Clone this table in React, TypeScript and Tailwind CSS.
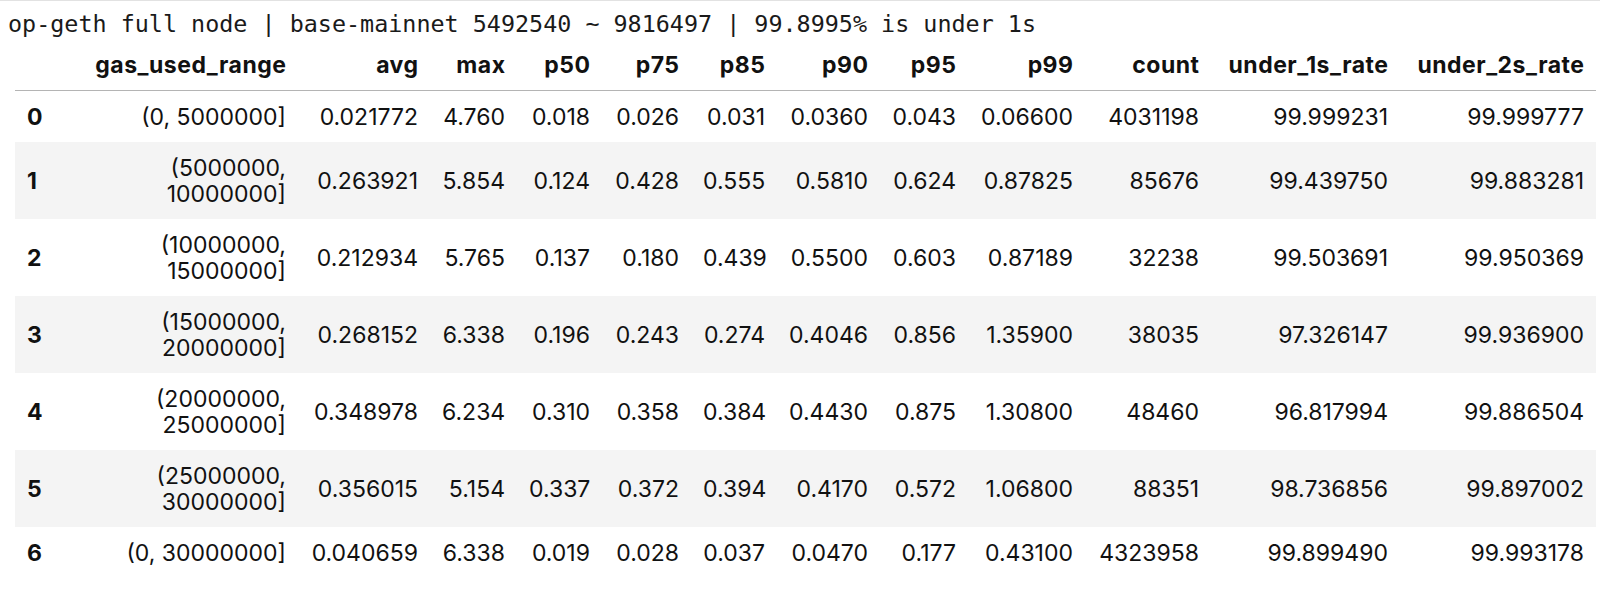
import React from 'react';

const COLUMNS = [
  { key: 'gas_used_range', w: 'w-[238px]' },
  { key: 'avg', w: 'w-[132px]' },
  { key: 'max', w: 'w-[87px]' },
  { key: 'p50', w: 'w-[85px]' },
  { key: 'p75', w: 'w-[89px]' },
  { key: 'p85', w: 'w-[86px]' },
  { key: 'p90', w: 'w-[103px]' },
  { key: 'p95', w: 'w-[88px]' },
  { key: 'p99', w: 'w-[117px]' },
  { key: 'count', w: 'w-[126px]' },
  { key: 'under_1s_rate', w: 'w-[189px]' },
  { key: 'under_2s_rate', w: 'w-[196px]' },
];

const ROWS: string[][] = [
  ['(0, 5000000]', '0.021772', '4.760', '0.018', '0.026', '0.031', '0.0360', '0.043', '0.06600', '4031198', '99.999231', '99.999777'],
  ['(5000000, 10000000]', '0.263921', '5.854', '0.124', '0.428', '0.555', '0.5810', '0.624', '0.87825', '85676', '99.439750', '99.883281'],
  ['(10000000, 15000000]', '0.212934', '5.765', '0.137', '0.180', '0.439', '0.5500', '0.603', '0.87189', '32238', '99.503691', '99.950369'],
  ['(15000000, 20000000]', '0.268152', '6.338', '0.196', '0.243', '0.274', '0.4046', '0.856', '1.35900', '38035', '97.326147', '99.936900'],
  ['(20000000, 25000000]', '0.348978', '6.234', '0.310', '0.358', '0.384', '0.4430', '0.875', '1.30800', '48460', '96.817994', '99.886504'],
  ['(25000000, 30000000]', '0.356015', '5.154', '0.337', '0.372', '0.394', '0.4170', '0.572', '1.06800', '88351', '98.736856', '99.897002'],
  ['(0, 30000000]', '0.040659', '6.338', '0.019', '0.028', '0.037', '0.0470', '0.177', '0.43100', '4323958', '99.899490', '99.993178'],
];

export default function App() {
  return (
    <div className="w-[1600px] h-[595px] bg-white border-t border-[#e2e2e2] overflow-hidden text-[#111]">
      {/* notebook print output */}
      <pre className="pl-[8px] pt-[8px] text-[23.4px] leading-[30px] font-['DejaVu_Sans_Mono',monospace] text-[#1a1a1a]">
        op-geth full node | base-mainnet 5492540 ~ 9816497 | 99.8995% is under 1s
      </pre>

      {/* dataframe */}
      <table className="ml-[15px] w-[1581px] table-fixed border-collapse font-['Inter',sans-serif] text-[23px] leading-[26px]">
        <thead>
          <tr className="border-b border-[#b4b4b4]">
            <th className="w-[45px]" />
            {COLUMNS.map((c) => (
              <th key={c.key} className={`${c.w} text-right font-bold tracking-[0.5px] pl-3 pr-[11.5px] py-[12.5px]`}>
                {c.key}
              </th>
            ))}
          </tr>
        </thead>
        <tbody>
          {ROWS.map((row, i) => (
            <tr key={i} className={i % 2 === 1 ? 'bg-[#f4f4f4]' : 'bg-white'}>
              <th className="text-left font-bold pl-3 py-[12.5px] align-middle">{i}</th>
              {row.map((cell, j) => (
                <td key={j} className="text-right px-3 py-[12.5px] align-middle">
                  {cell}
                </td>
              ))}
            </tr>
          ))}
        </tbody>
      </table>
    </div>
  );
}
